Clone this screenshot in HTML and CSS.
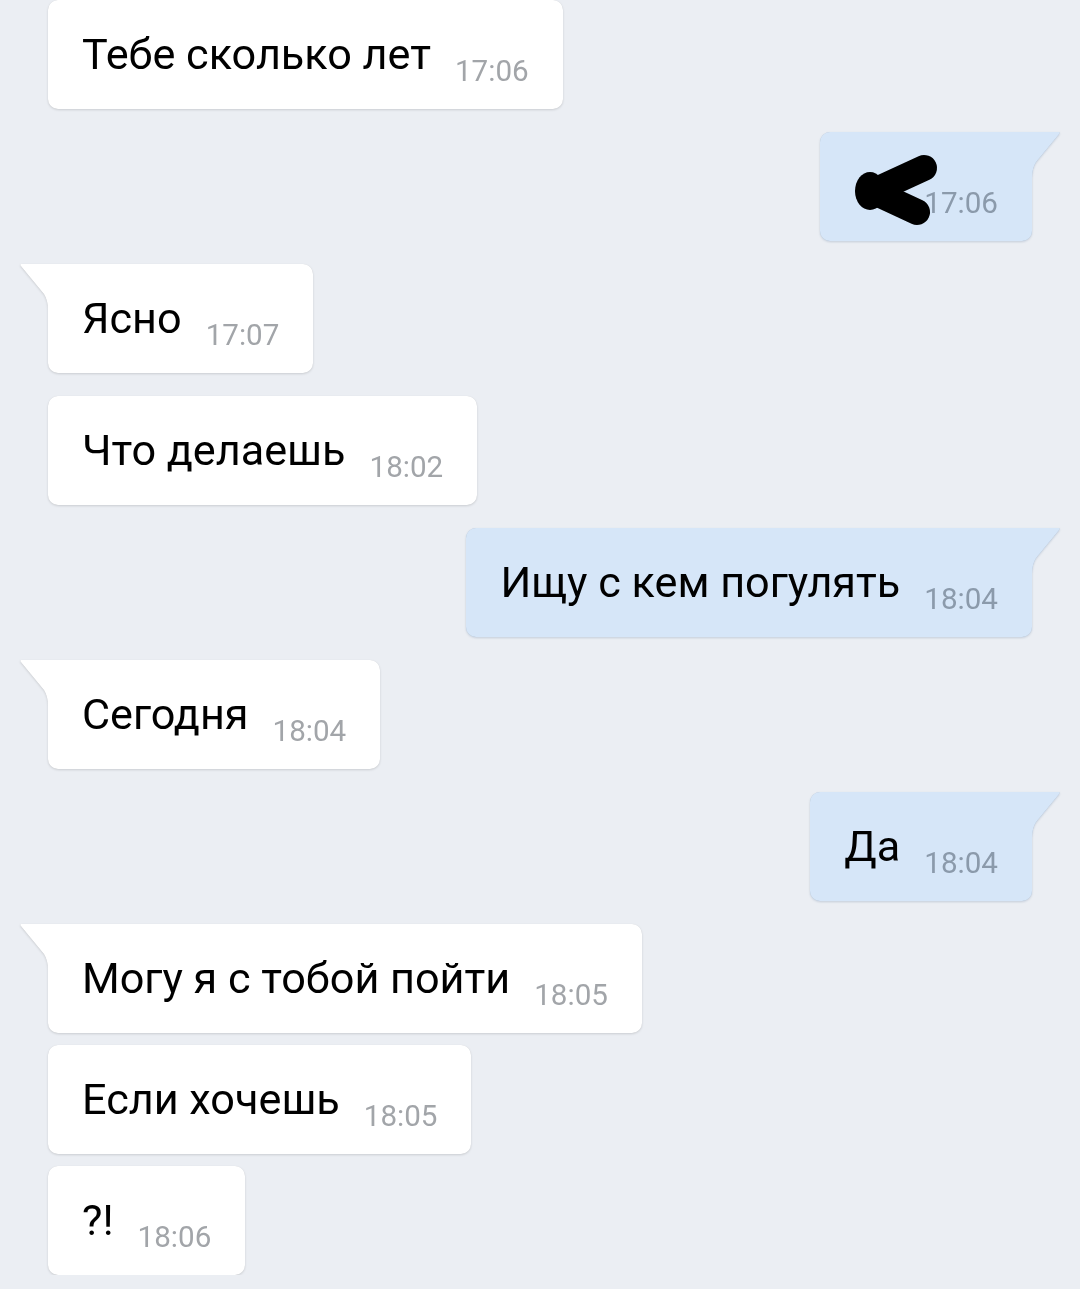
FILE: index.html
```html
<!DOCTYPE html>
<html lang="ru">
  <head>
    <meta charset="UTF-8" />
    <title>Сообщения</title>
    <link rel="stylesheet" href="styles.css">
  </head>
  <body>
    <div class="chat">
      <!-- входящие -->
      <div class="msg in">
        <span class="text">Тебе сколько лет</span>
        <span class="time">17:06</span>
      </div>

      <div class="msg out tail group">
        <span class="text scribble">
          <svg viewBox="0 0 46 52" width="46" height="52">
            <g stroke="#000" stroke-width="26" stroke-linecap="round" fill="none">
              <path d="M70 7 L20 30" />
              <path d="M20 31 L63 51" />
            </g>
            <ellipse cx="16" cy="30" rx="15" ry="19" fill="#000" />
          </svg>
        </span>
        <span class="time">17:06</span>
      </div>

      <div class="msg in tail group">
        <span class="text">Ясно</span>
        <span class="time">17:07</span>
      </div>
      <div class="msg in group">
        <span class="text">Что делаешь</span>
        <span class="time">18:02</span>
      </div>

      <div class="msg out tail group">
        <span class="text">Ищу с кем погулять</span>
        <span class="time">18:04</span>
      </div>

      <div class="msg in tail group">
        <span class="text">Сегодня</span>
        <span class="time">18:04</span>
      </div>

      <div class="msg out tail group">
        <span class="text">Да</span>
        <span class="time">18:04</span>
      </div>

      <div class="msg in tail group">
        <span class="text">Могу я с тобой пойти</span>
        <span class="time">18:05</span>
      </div>
      <div class="msg in">
        <span class="text">Если хочешь</span>
        <span class="time">18:05</span>
      </div>
      <div class="msg in">
        <span class="text">?!</span>
        <span class="time">18:06</span>
      </div>
    </div>
  </body>
</html>
```

FILE: styles.css
```css
* {
  box-sizing: border-box;
  margin: 0;
  padding: 0;
}
body {
  background-color: #ebeef3;
  font-family: Roboto, "Noto Sans", sans-serif;
  overflow: hidden;
}
.chat {
  display: flex;
  flex-direction: column;
  align-items: flex-start;
  padding: 0 48px;
}
.msg {
  position: relative;
  display: flex;
  align-items: flex-start;
  gap: 24px;
  height: 109px;
  padding: 29px 34px 20px;
  margin-top: 12px;
  border-radius: 10px;
  background-color: #fff;
  filter: drop-shadow(0 1px 1px rgba(0, 0, 0, 0.13)) drop-shadow(0 0 0.6px rgba(0, 0, 0, 0.12));
}
.msg:first-child {
  margin-top: 0;
}
.msg.group {
  margin-top: 23px;
}
.msg.out {
  align-self: flex-end;
  background-color: #d6e6f8;
  filter: drop-shadow(0 1px 1px rgba(20, 60, 110, 0.16)) drop-shadow(0 0 0.6px rgba(20, 60, 110, 0.2));
}
.text {
  font-size: 43.2px;
  line-height: 52px;
  color: #000;
  white-space: nowrap;
}
.time {
  margin-top: 24px;
  font-size: 29.6px;
  line-height: 36px;
  color: #a2a5a9;
}
.out .time {
  color: #8b9aab;
}

/* хвостик пузыря */
.msg.in.tail {
  border-top-left-radius: 0;
}
.msg.out.tail {
  border-top-right-radius: 0;
}
.msg.tail::before {
  content: "";
  position: absolute;
  top: 0;
  width: 32px;
  height: 46px;
  background-color: inherit;
}
.msg.in.tail::before {
  left: -28px;
  clip-path: path('M1 0 H32 V46 H28 C28 40 27 35 24 30 L0.5 1.5 Q0 0 1 0 Z');
}
.msg.out.tail::before {
  right: -28px;
  clip-path: path('M31 0 H0 V46 H4 C4 40 5 35 8 30 L31.5 1.5 Q32 0 31 0 Z');
}

.scribble {
  display: block;
  width: 46px;
  height: 52px;
}
.scribble svg {
  display: block;
  overflow: visible;
}
```
